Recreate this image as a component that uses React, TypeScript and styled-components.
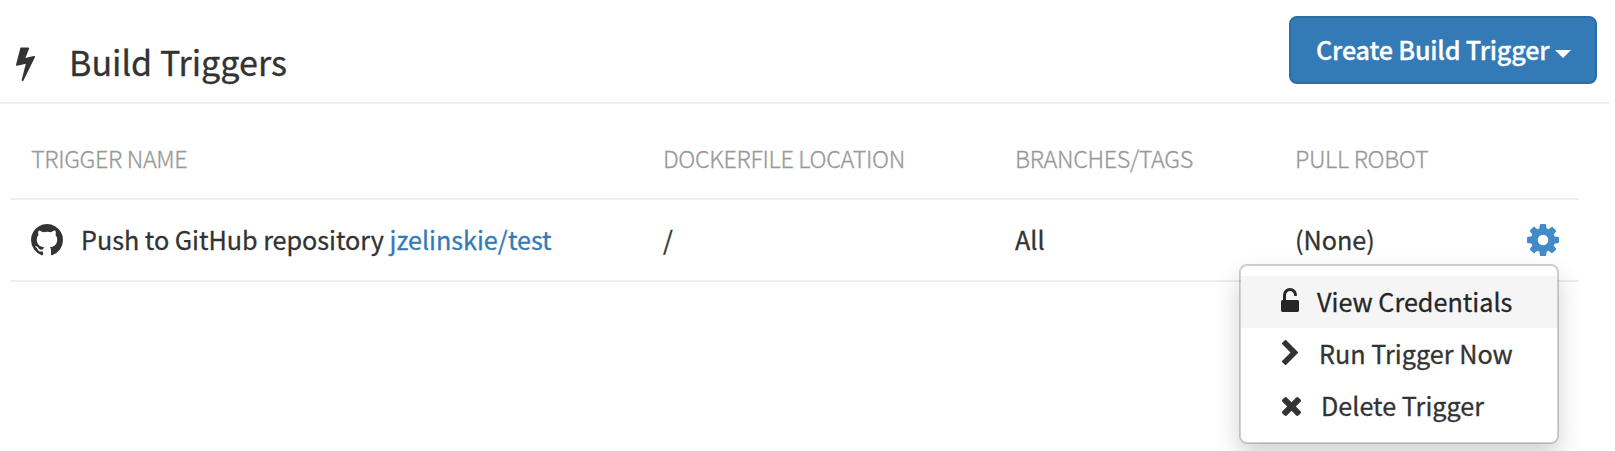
import React from 'react';
import styled, { createGlobalStyle, css } from 'styled-components';

const GlobalStyle = createGlobalStyle`
  * { box-sizing: border-box; }
  body {
    margin: 0;
    background: #fff;
    color: #333;
    font-family: 'Noto Sans CJK JP', 'Open Sans', sans-serif;
    font-size: 25.2px;
    -webkit-text-stroke: 0.3px currentColor;
    overflow: hidden;
  }
`;

const Page = styled.main`
  position: relative;
  width: 1615px;
  height: 451px;
  overflow: hidden;
`;

const Header = styled.header`
  display: flex;
  justify-content: space-between;
  width: 1609px;
  height: 104px;
  padding: 16px 12px 0 15.5px;
  border-bottom: 2px solid #eee;
`;

const Heading = styled.h3`
  display: flex;
  align-items: flex-start;
  gap: 34.5px;
  margin: 0;
  padding-top: 21px;
  font-size: 34.1px;
  font-weight: 400;
  line-height: 48px;
  white-space: nowrap;
  svg { margin-top: 8px; }
`;

const PrimaryButton = styled.button`
  display: flex;
  align-items: center;
  gap: 6px;
  width: 308px;
  height: 68px;
  padding: 0 24px 0 25px;
  border: 2px solid #2e6da4;
  border-radius: 8px;
  background: #337ab7;
  color: #fff;
  font: inherit;
  font-weight: 500;
  letter-spacing: -0.2px;
  line-height: 40px;
  white-space: nowrap;
`;

const Caret = styled.span`
  margin-top: 8px;
  border-top: 8px solid #fff;
  border-left: 8px solid transparent;
  border-right: 8px solid transparent;
`;

const Table = styled.section`
  width: 1568px;
  margin-left: 11px;
`;

const Label = styled.span`
  padding-bottom: 2px;
`;

const Row = styled.div<{ $head?: boolean }>`
  display: grid;
  grid-template-columns: 632px 352px 280px 1fr 52px;
  align-items: center;
  height: 82px;
  padding-left: 20px;
  border-bottom: 2px solid #eee;
  line-height: 40px;
  white-space: nowrap;
  ${p => p.$head && css`
    height: 96px;
    padding-top: 16px;
    color: #999;
    font-size: 23.4px;
    font-weight: 300;
    letter-spacing: -0.35px;
    text-transform: uppercase;
  `}
`;

const NameCell = styled.div`
  display: flex;
  align-items: center;
  gap: 18px;
  letter-spacing: -0.03px;
`;

const RepoLink = styled.a`
  color: #337ab7;
  text-decoration: none;
`;

const Menu = styled.ul`
  position: absolute;
  left: 1239px;
  top: 264px;
  width: 320px;
  height: 180px;
  margin: 0;
  padding: 10px 0;
  list-style: none;
  background: #fff;
  background-clip: padding-box;
  border: 2px solid rgba(0, 0, 0, 0.18);
  border-radius: 8px;
  box-shadow: 0 12px 24px rgba(0, 0, 0, 0.175);
`;

const MenuItem = styled.li<{ $active?: boolean; $gap: number }>`
  display: flex;
  align-items: center;
  gap: ${p => p.$gap}px;
  height: 52px;
  padding-left: 40px;
  line-height: 40px;
  white-space: nowrap;
  color: ${p => (p.$active ? '#262626' : '#333')};
  background: ${p => (p.$active ? '#f5f5f5' : 'transparent')};
`;

const Glyph = styled.svg<{ $dx?: number; $dy?: number }>`
  display: block;
  flex: none;
  fill: currentColor;
  stroke: none;
  margin-left: ${p => p.$dx ?? 0}px;
  margin-bottom: ${p => p.$dy ?? 0}px;
`;

const BOLT = 'M1333 566q18 20 7 44l-540 1157q-13 25-42 25-4 0-14-2-17-5-25.5-19t-4.5-30l197-808-406 101q-4 1-12 1-18 0-31-11-18-15-13-39l201-825q4-14 16-23t28-9h328q19 0 32 12.5t13 29.5q0 8-5 18l-171 463 396-98q8-2 12-2 19 0 34 15z';
const GITHUB = 'M896 128q209 0 385.5 103t279.5 279.5 103 385.5q0 251-146.5 451.5t-378.5 277.5q-27 5-40-7t-13-30q0-3 .5-76.5t.5-134.5q0-97-52-142 57-6 102.5-18t94-39 81-66.5 53-105 20.5-150.5q0-119-79-206 37-91-8-204-28-9-81 11t-92 44l-38 24q-93-26-192-26t-192 26q-16-11-42.5-27t-83.5-38.5-85-13.5q-45 113-8 204-79 87-79 206 0 85 20.5 150t52.5 105 80.5 67 94 39 102.5 18q-39 36-49 103-21 10-45 15t-57 5-65.5-21.5-55.5-62.5q-19-32-48.5-52t-49.5-24l-20-3q-21 0-29 4.5t-5 11.5 9 14 13 12l7 5q22 10 43.5 38t31.5 51l10 23q13 38 44 61.5t67 30 69.5 7 55.5-3.5l23-4q0 38 .5 88.5t.5 54.5q0 18-13 30t-40 7q-232-77-378.5-277.5t-146.5-451.5q0-209 103-385.5t279.5-279.5 385.5-103z';
const COG = 'M1152 896q0-106-75-181t-181-75-181 75-75 181 75 181 181 75 181-75 75-181zm512-109v222q0 12-8 23t-20 13l-185 28q-19 54-39 91 35 50 107 138 10 12 10 25t-9 23q-27 37-99 108t-94 71q-12 0-26-9l-138-108q-44 23-91 38-16 136-29 186-7 28-36 28h-222q-14 0-24.5-8.5t-11.5-21.5l-28-184q-49-16-90-37l-141 107q-10 9-25 9-14 0-25-11-126-114-165-168-7-10-7-23 0-12 8-23 15-21 51-66.5t54-70.5q-27-50-41-99l-183-27q-13-2-21-12.5t-8-23.5v-222q0-12 8-23t19-13l186-28q14-46 39-92-40-57-107-138-10-12-10-24 0-10 9-23 26-36 98.5-107.5t94.5-71.5q13 0 26 10l138 107q44-23 91-38 16-136 29-186 7-28 36-28h222q14 0 24.5 8.5t11.5 21.5l28 184q49 16 90 37l142-107q9-9 24-9 13 0 25 10 129 119 165 170 7 8 7 22 0 12-8 23-15 21-51 66.5t-54 70.5q26 50 41 98l183 28q13 2 21 12.5t8 23.5z';
const UNLOCK = 'M1376 768q40 0 68 28t28 68v576q0 40-28 68t-68 28h-960q-40 0-68-28t-28-68v-576q0-40 28-68t68-28h32v-320q0-185 131.5-316.5t316.5-131.5 316.5 131.5 131.5 316.5q0 26-19 45t-45 19h-64q-26 0-45-19t-19-45q0-106-75-181t-181-75-181 75-75 181v320h736z';
const CHEVRON = 'M1363 877l-742 742q-19 19-45 19t-45-19l-166-166q-19-19-19-45t19-45l531-531-531-531q-19-19-19-45t19-45l166-166q19-19 45-19t45 19l742 742q19 19 19 45t-19 45z';
const TIMES = 'M1490 1322q0 40-28 68l-136 136q-28 28-68 28t-68-28l-294-294-294 294q-28 28-68 28t-68-28l-136-136q-28-28-28-68t28-68l294-294-294-294q-28-28-28-68t28-68l136-136q28-28 68-28t68 28l294 294 294-294q28-28 68-28t68 28l136 136q28 28 28 68t-28 68l-294 294 294 294q28 28 28 68z';

export default function App() {
  return (
    <Page>
      <GlobalStyle />
      <Header>
        <Heading>
          <Glyph width="19" height="36" viewBox="448 0 896 1792" preserveAspectRatio="none"><path d={BOLT} /></Glyph>
          Build Triggers
        </Heading>
        <PrimaryButton>
          <Label>Create Build Trigger</Label>
          <Caret />
        </PrimaryButton>
      </Header>
      <Table>
        <Row $head>
          <Label>Trigger Name</Label>
          <Label>Dockerfile Location</Label>
          <Label>Branches/Tags</Label>
          <Label>Pull Robot</Label>
        </Row>
        <Row>
          <NameCell>
            <Glyph width="32" height="32" viewBox="128 128 1536 1536" preserveAspectRatio="none"><path d={GITHUB} /></Glyph>
            <Label>Push to GitHub repository <RepoLink>jzelinskie/test</RepoLink></Label>
          </NameCell>
          <Label>/</Label>
          <Label>All</Label>
          <Label>(None)</Label>
          <Glyph width="32" height="32" viewBox="128 128 1536 1536" color="#428bca"><path d={COG} /></Glyph>
        </Row>
      </Table>
      <Menu>
        <MenuItem $active $gap={18}>
          <Glyph width="18" height="24" viewBox="320 0 1152 1536" $dy={4}><path d={UNLOCK} /></Glyph>
          <Label>View Credentials</Label>
        </MenuItem>
        <MenuItem $gap={21}>
          <Glyph width="16" height="25" viewBox="346 26 1036 1612" preserveAspectRatio="none" $dx={1} $dy={3}><path d={CHEVRON} /></Glyph>
          <Label>Run Trigger Now</Label>
        </MenuItem>
        <MenuItem $gap={20}>
          <Glyph width="19" height="19" viewBox="302 366 1188 1188" $dx={1}><path d={TIMES} /></Glyph>
          <Label>Delete Trigger</Label>
        </MenuItem>
      </Menu>
    </Page>
  );
}
